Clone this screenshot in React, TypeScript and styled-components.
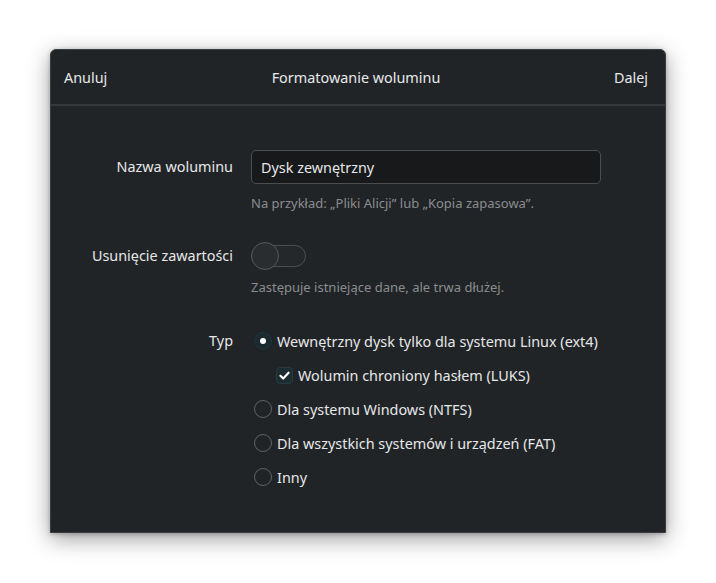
import React from "react";
import styled, { createGlobalStyle } from "styled-components";

const Global = createGlobalStyle`
  html, body { margin: 0; padding: 0; background: #ffffff; }
  body { font-family: "Noto Sans", "Open Sans", sans-serif; }
`;

const Page = styled.div`
  width: 716px;
  height: 583px;
  padding: 49px 50px 0 50px;
  box-sizing: border-box;
`;

const Dialog = styled.div`
  width: 616px;
  height: 484px;
  box-sizing: border-box;
  background: #212427;
  border: 1px solid #3a3d41;
  border-radius: 6px 6px 0 0;
  box-shadow: 0 6px 22px rgba(0, 0, 0, 0.38), 0 1px 4px rgba(0, 0, 0, 0.25);
  display: flex;
  flex-direction: column;
  color: #e6e7e8;
  font-size: 14.4px;
`;

const Header = styled.div`
  height: 54px;
  flex: none;
  display: grid;
  grid-template-columns: 1fr auto 1fr;
  align-items: center;
  padding: 0 17px 0 13px;
  border-bottom: 2px solid #36393c;
`;

const HeaderButton = styled.span<{ $end?: boolean }>`
  justify-self: ${(p) => (p.$end ? "end" : "start")};
  color: #e8e9ea;
`;

const Title = styled.span`
  color: #e8e9ea;
`;

const Body = styled.div`
  display: grid;
  grid-template-columns: 182px 350px;
  column-gap: 18px;
  padding-top: 44px;
  align-items: center;
`;

const Label = styled.div<{ $top?: boolean }>`
  justify-self: end;
  align-self: ${(p) => (p.$top ? "start" : "center")};
  line-height: 20px;
  margin-top: ${(p) => (p.$top ? "7px" : "0")};
`;

const Entry = styled.div`
  height: 34px;
  box-sizing: border-box;
  border: 1px solid #4a4d51;
  border-radius: 5px;
  background: #17191b;
  display: flex;
  align-items: center;
  padding: 0 9px;
`;

const Hint = styled.div<{ $mt: number; $mb: number }>`
  grid-column: 2;
  font-size: 13px;
  color: #8a8d90;
  line-height: 18px;
  white-space: nowrap;
  margin-top: ${(p) => p.$mt}px;
  margin-bottom: ${(p) => p.$mb}px;
`;

const SwitchWrap = styled.div`
  position: relative;
  width: 56px;
  height: 28px;
`;

const SwitchTrack = styled.div`
  position: absolute;
  left: 9px;
  top: 3px;
  width: 46px;
  height: 22px;
  box-sizing: border-box;
  border: 1px solid #4b4e52;
  border-radius: 11px;
  background: #25282b;
`;

const SwitchKnob = styled.div`
  position: absolute;
  left: 0;
  top: 0;
  width: 28px;
  height: 28px;
  box-sizing: border-box;
  border-radius: 50%;
  border: 1.5px solid #56595d;
  background: #2a2d30;
`;

const OptionList = styled.div`
  display: flex;
  flex-direction: column;
`;

const Option = styled.div<{ $indent?: boolean }>`
  height: 34px;
  display: flex;
  align-items: center;
  white-space: nowrap;
  gap: 5px;
  padding-left: ${(p) => (p.$indent ? "25px" : "3px")};
`;

const Radio = styled.span<{ $on?: boolean }>`
  width: 18px;
  height: 18px;
  box-sizing: border-box;
  border-radius: 50%;
  flex: none;
  display: flex;
  align-items: center;
  justify-content: center;
  border: ${(p) => (p.$on ? "1px solid #22343a" : "1.5px solid #5f6266")};
  background: ${(p) => (p.$on ? "#1b2a2f" : "transparent")};
  box-shadow: ${(p) => (p.$on ? "0 0 0 1.5px #1a2428" : "none")};
  &::after {
    content: "";
    display: ${(p) => (p.$on ? "block" : "none")};
    width: 6px;
    height: 6px;
    border-radius: 50%;
    background: #ffffff;
  }
`;

const Check = styled.span`
  width: 17px;
  height: 17px;
  box-sizing: border-box;
  flex: none;
  border-radius: 4px;
  background: #1c2c31;
  border: 1px solid #273b41;
  display: flex;
  align-items: center;
  justify-content: center;
`;

const OptionText = styled.span`
  color: #e6e7e8;
`;

export default function App() {
  return (
    <>
      <Global />
      <Page>
        <Dialog>
          <Header>
            <HeaderButton>Anuluj</HeaderButton>
            <Title>Formatowanie woluminu</Title>
            <HeaderButton $end>Dalej</HeaderButton>
          </Header>
          <Body>
            <Label>Nazwa woluminu</Label>
            <Entry>Dysk zewnętrzny</Entry>
            <Hint $mt={10} $mb={30}>
              Na przykład: „Pliki Alicji” lub „Kopia zapasowa”.
            </Hint>
            <Label>Usunięcie zawartości</Label>
            <SwitchWrap>
              <SwitchTrack />
              <SwitchKnob />
            </SwitchWrap>
            <Hint $mt={8} $mb={28}>
              Zastępuje istniejące dane, ale trwa dłużej.
            </Hint>
            <Label $top>Typ</Label>
            <OptionList>
              <Option>
                <Radio $on />
                <OptionText>Wewnętrzny dysk tylko dla systemu Linux (ext4)</OptionText>
              </Option>
              <Option $indent>
                <Check>
                  <svg width="13" height="13" viewBox="0 0 13 13">
                    <path d="M2.4 6.8 L5.2 9.5 L10.6 3.7" fill="none" stroke="#ffffff" strokeWidth="2.1" strokeLinecap="round" strokeLinejoin="round" />
                  </svg>
                </Check>
                <OptionText>Wolumin chroniony hasłem (LUKS)</OptionText>
              </Option>
              <Option>
                <Radio />
                <OptionText>Dla systemu Windows (NTFS)</OptionText>
              </Option>
              <Option>
                <Radio />
                <OptionText>Dla wszystkich systemów i urządzeń (FAT)</OptionText>
              </Option>
              <Option>
                <Radio />
                <OptionText>Inny</OptionText>
              </Option>
            </OptionList>
          </Body>
        </Dialog>
      </Page>
    </>
  );
}
